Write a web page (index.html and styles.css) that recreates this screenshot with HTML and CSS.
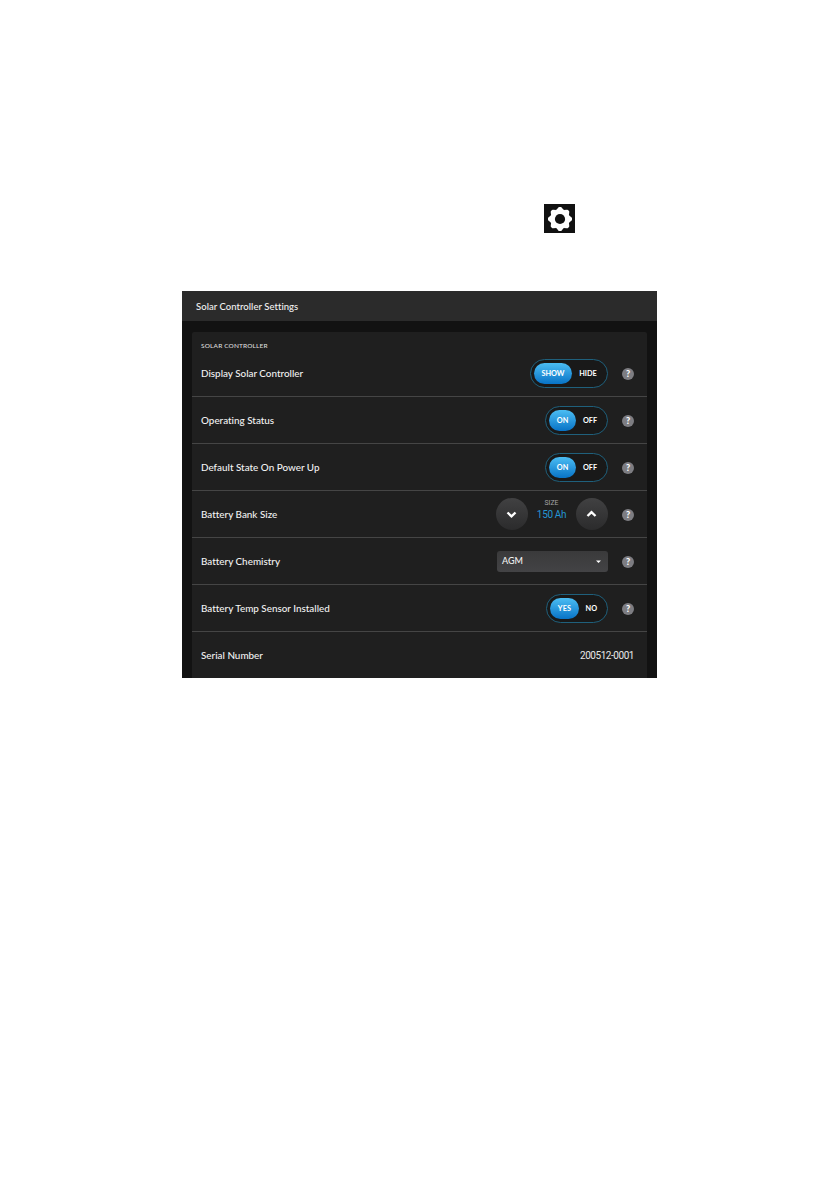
FILE: index.html
```html
<!DOCTYPE html>
<html lang="en">
<head>
  <meta charset="UTF-8" />
  <meta name="viewport" content="width=device-width, initial-scale=1.0" />
  <title>Solar Controller Settings</title>
  <link rel="stylesheet" href="styles.css">
</head>
<body>

  <div class="page">
    <div class="gear-button">
      <svg width="26" height="26" viewBox="-13 -13 26 26">
        <g fill="#fff">
          <circle r="9.9" />
          <path id="tooth" d="M-3.8 -8.8 L-1.7 -11.4 Q-1.3 -12 -0.7 -12 H0.7 Q1.3 -12 1.7 -11.4 L3.8 -8.8 Z" />
          <use href="#tooth" transform="rotate(45)" />
          <use href="#tooth" transform="rotate(90)" />
          <use href="#tooth" transform="rotate(135)" />
          <use href="#tooth" transform="rotate(180)" />
          <use href="#tooth" transform="rotate(225)" />
          <use href="#tooth" transform="rotate(270)" />
          <use href="#tooth" transform="rotate(315)" />
        </g>
        <circle r="5.1" fill="#111" />
      </svg>
    </div>

    <div class="screen">
      <div class="screen-header">Solar Controller Settings</div>

      <div class="panel">
        <div class="section-title">SOLAR CONTROLLER</div>

        <div class="row">
          <span class="label">Display Solar Controller</span>
          <div class="toggle toggle-show">
            <span class="option active">SHOW</span>
            <span class="option">HIDE</span>
          </div>
          <span class="help">?</span>
        </div>

        <div class="row">
          <span class="label">Operating Status</span>
          <div class="toggle toggle-on">
            <span class="option active">ON</span>
            <span class="option">OFF</span>
          </div>
          <span class="help">?</span>
        </div>

        <div class="row">
          <span class="label">Default State On Power Up</span>
          <div class="toggle toggle-on">
            <span class="option active">ON</span>
            <span class="option">OFF</span>
          </div>
          <span class="help">?</span>
        </div>

        <div class="row">
          <span class="label">Battery Bank Size</span>
          <div class="stepper">
            <span class="step">
              <svg width="12" height="8" viewBox="0 0 12 8"><path d="M1.5 2.5 L5.5 6.3 L9.5 2.5" /></svg>
            </span>
            <div class="size">
              <span class="size-label">SIZE</span>
              <span class="size-value">150 Ah</span>
            </div>
            <span class="step">
              <svg width="12" height="8" viewBox="0 0 12 8"><path d="M1.5 6 L5.5 2.2 L9.5 6" /></svg>
            </span>
          </div>
          <span class="help">?</span>
        </div>

        <div class="row">
          <span class="label">Battery Chemistry</span>
          <div class="select">
            <span class="select-value">AGM</span>
            <svg width="5" height="3" viewBox="0 0 5 3"><path d="M0 0.5 H5 L2.5 3 Z" fill="#fff" /></svg>
          </div>
          <span class="help">?</span>
        </div>

        <div class="row">
          <span class="label">Battery Temp Sensor Installed</span>
          <div class="toggle toggle-yes">
            <span class="option active">YES</span>
            <span class="option">NO</span>
          </div>
          <span class="help">?</span>
        </div>

        <div class="row">
          <span class="label">Serial Number</span>
          <span class="serial">200512-0001</span>
        </div>
      </div>
    </div>
  </div>

</body>
</html>
```

FILE: styles.css
```css
* {
  box-sizing: border-box;
}
body {
  margin: 0;
  background-color: #fff;
  font-family: Lato, "Liberation Sans", sans-serif;
  font-variant-ligatures: none;
  color: #f2f2f2;
}
.page {
  width: 475px;
  min-height: 1191px;
  margin-left: 182px;
  padding-top: 204px;
}
.gear-button {
  display: flex;
  align-items: center;
  justify-content: center;
  width: 31px;
  height: 29px;
  margin: 0 0 58px 362px;
  padding: 1px 0 0 1px;
  background-color: #111;
}
.screen {
  height: 387px;
  background-color: #121212;
  overflow: hidden;
}
.screen-header {
  height: 30px;
  padding-left: 14px;
  background-color: #2b2b2b;
  font-size: 9.5px;
  font-weight: 500;
  line-height: 31px;
  letter-spacing: 0.04px;
}
.panel {
  height: 346px;
  margin: 11px 10px 0;
  background-color: #1f1f1f;
  border-radius: 2px 2px 0 0;
}
.section-title {
  height: 18px;
  padding: 9px 0 0 9px;
  font-size: 6.5px;
  font-weight: 500;
  line-height: 10px;
  letter-spacing: 0.15px;
  color: #ddd;
}
.row {
  display: flex;
  align-items: center;
  height: 47px;
  padding: 0 13px 0 9px;
  border-bottom: 1px solid #454545;
}
.row:last-child {
  border-bottom-color: transparent;
}
.label {
  flex: 1;
  font-size: 9.9px;
  font-weight: 500;
}
/* Two-way switch */
.toggle {
  display: flex;
  height: 29px;
  padding: 3px;
  border: 1px solid #1f607c;
  border-radius: 15px;
  background-color: #191919;
}
.option {
  display: flex;
  flex: 1;
  align-items: center;
  justify-content: center;
  height: 21px;
  border-radius: 10.5px;
  color: #fff;
  font-size: 7.3px;
  font-weight: 700;
}
.option.active {
  flex: none;
  background: linear-gradient(#4bbdf3, #0873c6);
}
.toggle-show {
  width: 78px;
}
.toggle-show .active {
  width: 38px;
}
.toggle-on {
  width: 63px;
}
.toggle-on .active {
  width: 27px;
}
.toggle-yes {
  width: 62px;
}
.toggle-yes .active {
  width: 29px;
}
.toggle-yes .option {
  letter-spacing: 0.2px;
}
.help {
  width: 12px;
  height: 12px;
  margin: 1px 0 0 14px;
  border-radius: 50%;
  background-color: #7d7d82;
  color: #fff;
  font-size: 9px;
  font-weight: 900;
  line-height: 12px;
  text-align: center;
}
/* Battery size stepper */
.stepper {
  display: flex;
  align-items: center;
}
.step {
  display: flex;
  align-items: center;
  justify-content: center;
  width: 32px;
  height: 32px;
  border-radius: 50%;
  background: linear-gradient(#414142, #2b2b2c);
}
.step path {
  fill: none;
  stroke: #fff;
  stroke-width: 2.4;
}
.size {
  display: flex;
  flex-direction: column;
  align-items: center;
  width: 48px;
  height: 32px;
  padding: 1px 1px 0 0;
  font-family: Roboto, sans-serif;
}
.size-label {
  color: #a5a5a5;
  font-size: 6.8px;
  line-height: 9px;
}
.size-value {
  color: #2496d2;
  font-size: 10px;
  line-height: 14px;
  letter-spacing: -0.35px;
}
.select {
  display: flex;
  align-items: center;
  justify-content: space-between;
  width: 111px;
  height: 21px;
  padding: 0 7px 0 5px;
  border-radius: 3px;
  background: linear-gradient(#3a3a3b, #434345);
}
.select-value {
  font-size: 9px;
  font-weight: 500;
  line-height: 19px;
  padding-bottom: 1px;
}
.serial {
  color: #e8e8e8;
  font-family: Roboto, sans-serif;
  font-size: 10px;
  letter-spacing: -0.45px;
}
```
